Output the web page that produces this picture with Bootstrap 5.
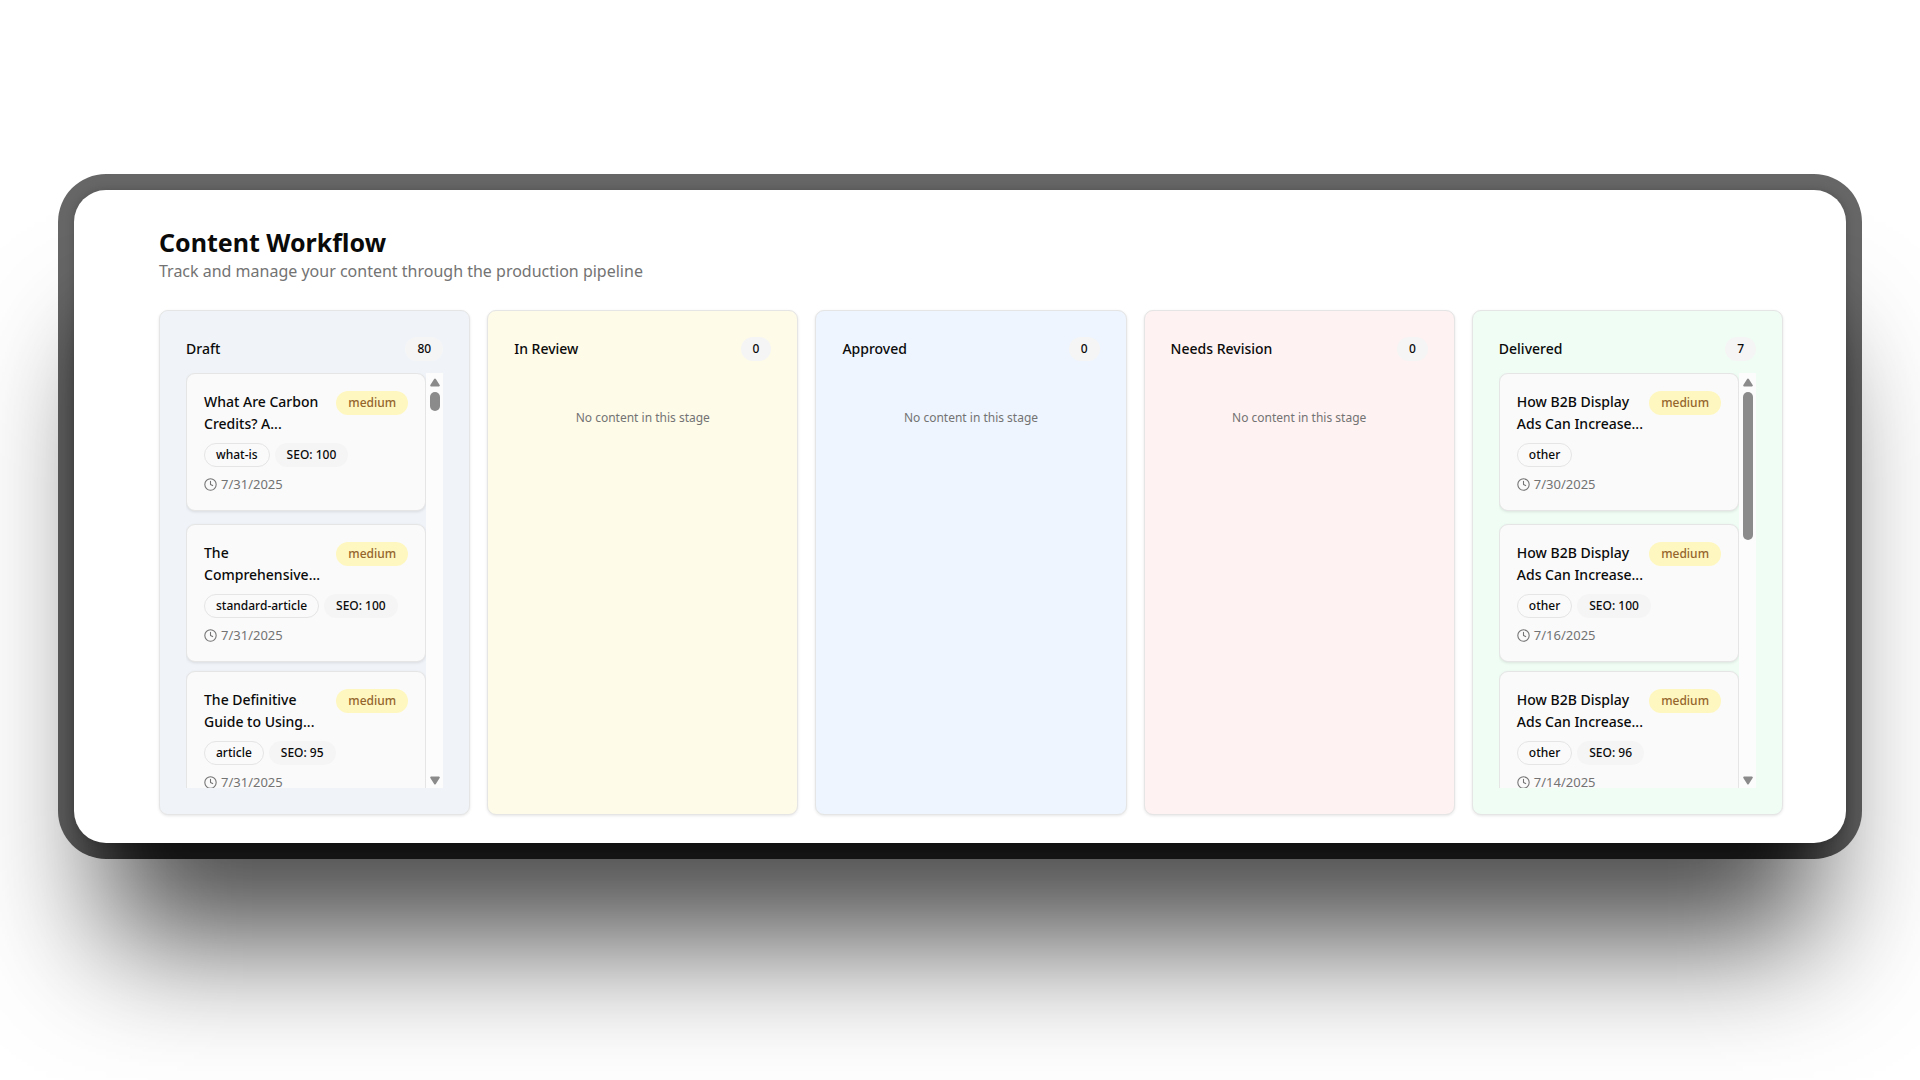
<!DOCTYPE html>
<html lang="en">
<head>
<meta charset="utf-8">
<meta name="viewport" content="width=device-width, initial-scale=1">
<title>Content Workflow</title>
<link href="https://cdn.jsdelivr.net/npm/bootstrap@5.3.0/dist/css/bootstrap.min.css" rel="stylesheet">
<style>
body{font-family:"Noto Sans","Open Sans",sans-serif;color:#0a0a0a;background:#fff;min-height:100vh}
.stage-wrap{padding:174px 58px 0}
.frame{border-radius:48px;box-shadow:0 130px 120px -48px rgba(0,0,0,.7)}
.frame-clip{background:rgba(0,0,0,.6);border-radius:48px;overflow:hidden;padding:16px}
.panel{background:#fff;border-radius:32px;padding:35px 63px 28px 85px;box-shadow:0 0 10px rgba(0,0,0,.2),0 110px 80px -20px rgba(0,0,0,.82)}
.title{font-size:25px;line-height:34px;font-weight:700}
.subtitle{font-size:16px;line-height:24px;color:#737373;margin-bottom:27px}
.board{display:grid;grid-template-columns:repeat(5,minmax(0,1fr));gap:17px}
.lane{border:1px solid #e5e5e5;border-radius:9px;padding:26px;box-shadow:0 1px 3px rgba(0,0,0,.1)}
.lane-draft{background:#f0f4f9}
.lane-review{background:#fefbe9}
.lane-approved{background:#eef5fe}
.lane-revision{background:#fef2f2}
.lane-delivered{background:#f0fdf5}
.lane-title{font-size:14px;line-height:24px;font-weight:500}
.pill{display:inline-block;flex:none;font-size:12px;line-height:18px;font-weight:500;padding:2px 11px;border:1px solid transparent;border-radius:12px;white-space:nowrap}
.pill-grey{background:#f5f5f5}
.pill-line{border-color:#e5e5e5}
.pill-medium{background:#fef7c0;color:#94652c}
.empty{font-size:12px;line-height:20px;color:#737373;padding-top:47px}
.scroller{height:415px;margin-top:12px;overflow:hidden}
.item{background:#fafafa;border:1px solid #e5e5e5;border-radius:9px;padding:17px;margin-bottom:13px;box-shadow:0 1px 3px rgba(0,0,0,.1)}
.item-tight{margin-bottom:9px}
.item-title{font-size:14px;line-height:22px;font-weight:500;white-space:nowrap;min-width:0}
.tags{gap:5px;margin:8px 0}
.date{font-size:13px;line-height:18px;color:#737373;gap:4px}
.track{width:17px;background:#fcfcfc;flex:none;padding:5px 0 3px}
.thumb{width:10px;background:#8b8b8b;border-radius:5px;margin-top:5px}
.thumb-short{height:19px}
.thumb-long{height:148px}
</style>
<script src="https://cdn.jsdelivr.net/npm/bootstrap@5.3.0/dist/js/bootstrap.bundle.min.js"></script>
</head>
<body>
<svg class="d-none" aria-hidden="true">
  <symbol id="clock" viewBox="0 0 24 24"><g fill="none" stroke="currentColor" stroke-width="2" stroke-linecap="round" stroke-linejoin="round"><circle cx="12" cy="12" r="10.5"/><path d="M12 6v6l4 2"/></g></symbol>
  <symbol id="up" viewBox="0 0 10 9"><path d="M5 1.5 8.8 7.5H1.2Z" fill="#8b8b8b" stroke="#8b8b8b" stroke-width="2" stroke-linejoin="round"/></symbol>
  <symbol id="down" viewBox="0 0 10 9"><path d="M5 7.5 8.8 1.5H1.2Z" fill="#8b8b8b" stroke="#8b8b8b" stroke-width="2" stroke-linejoin="round"/></symbol>
</svg>
<main class="stage-wrap">
<div class="frame"><div class="frame-clip"><div class="panel">
  <h1 class="title mb-0">Content Workflow</h1>
  <p class="subtitle">Track and manage your content through the production pipeline</p>
  <div class="board">

    <section class="lane lane-draft">
      <div class="d-flex justify-content-between"><h2 class="lane-title mb-0">Draft</h2><span class="pill pill-grey">80</span></div>
      <div class="scroller d-flex">
        <div class="flex-grow-1">
          <article class="item">
            <div class="d-flex justify-content-between align-items-start"><h3 class="item-title mb-0">What Are Carbon<br>Credits? A...</h3><span class="pill pill-medium">medium</span></div>
            <div class="tags d-flex"><span class="pill pill-line">what-is</span><span class="pill pill-grey">SEO: 100</span></div>
            <div class="date d-flex align-items-center"><svg width="13" height="13"><use href="#clock"/></svg><span>7/31/2025</span></div>
          </article>
          <article class="item item-tight">
            <div class="d-flex justify-content-between align-items-start"><h3 class="item-title mb-0">The<br>Comprehensive...</h3><span class="pill pill-medium">medium</span></div>
            <div class="tags d-flex"><span class="pill pill-line">standard-article</span><span class="pill pill-grey">SEO: 100</span></div>
            <div class="date d-flex align-items-center"><svg width="13" height="13"><use href="#clock"/></svg><span>7/31/2025</span></div>
          </article>
          <article class="item">
            <div class="d-flex justify-content-between align-items-start"><h3 class="item-title mb-0">The Definitive<br>Guide to Using...</h3><span class="pill pill-medium">medium</span></div>
            <div class="tags d-flex"><span class="pill pill-line">article</span><span class="pill pill-grey">SEO: 95</span></div>
            <div class="date d-flex align-items-center"><svg width="13" height="13"><use href="#clock"/></svg><span>7/31/2025</span></div>
          </article>
        </div>
        <div class="track d-flex flex-column align-items-center" aria-hidden="true"><svg width="10" height="9"><use href="#up"/></svg><div class="thumb thumb-short"></div><svg class="mt-auto" width="10" height="9"><use href="#down"/></svg></div>
      </div>
    </section>

    <section class="lane lane-review">
      <div class="d-flex justify-content-between"><h2 class="lane-title mb-0">In Review</h2><span class="pill pill-grey">0</span></div>
      <p class="empty text-center mb-0">No content in this stage</p>
    </section>

    <section class="lane lane-approved">
      <div class="d-flex justify-content-between"><h2 class="lane-title mb-0">Approved</h2><span class="pill pill-grey">0</span></div>
      <p class="empty text-center mb-0">No content in this stage</p>
    </section>

    <section class="lane lane-revision">
      <div class="d-flex justify-content-between"><h2 class="lane-title mb-0">Needs Revision</h2><span class="pill pill-grey">0</span></div>
      <p class="empty text-center mb-0">No content in this stage</p>
    </section>

    <section class="lane lane-delivered">
      <div class="d-flex justify-content-between"><h2 class="lane-title mb-0">Delivered</h2><span class="pill pill-grey">7</span></div>
      <div class="scroller d-flex">
        <div class="flex-grow-1">
          <article class="item">
            <div class="d-flex justify-content-between align-items-start"><h3 class="item-title mb-0">How B2B Display<br>Ads Can Increase...</h3><span class="pill pill-medium">medium</span></div>
            <div class="tags d-flex"><span class="pill pill-line">other</span></div>
            <div class="date d-flex align-items-center"><svg width="13" height="13"><use href="#clock"/></svg><span>7/30/2025</span></div>
          </article>
          <article class="item item-tight">
            <div class="d-flex justify-content-between align-items-start"><h3 class="item-title mb-0">How B2B Display<br>Ads Can Increase...</h3><span class="pill pill-medium">medium</span></div>
            <div class="tags d-flex"><span class="pill pill-line">other</span><span class="pill pill-grey">SEO: 100</span></div>
            <div class="date d-flex align-items-center"><svg width="13" height="13"><use href="#clock"/></svg><span>7/16/2025</span></div>
          </article>
          <article class="item">
            <div class="d-flex justify-content-between align-items-start"><h3 class="item-title mb-0">How B2B Display<br>Ads Can Increase...</h3><span class="pill pill-medium">medium</span></div>
            <div class="tags d-flex"><span class="pill pill-line">other</span><span class="pill pill-grey">SEO: 96</span></div>
            <div class="date d-flex align-items-center"><svg width="13" height="13"><use href="#clock"/></svg><span>7/14/2025</span></div>
          </article>
        </div>
        <div class="track d-flex flex-column align-items-center" aria-hidden="true"><svg width="10" height="9"><use href="#up"/></svg><div class="thumb thumb-long"></div><svg class="mt-auto" width="10" height="9"><use href="#down"/></svg></div>
      </div>
    </section>

  </div>
</div></div></div>
</main>
</body>
</html>
